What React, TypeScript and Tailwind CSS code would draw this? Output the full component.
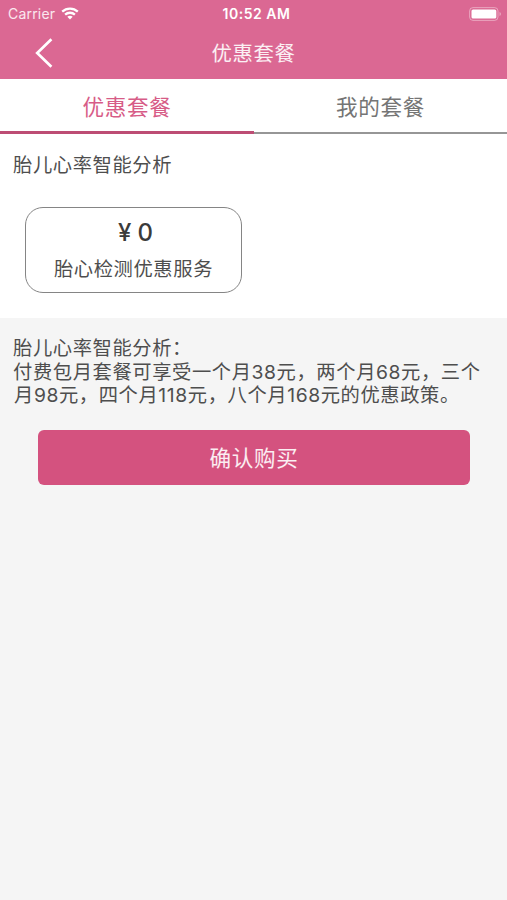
const description = [
  '胎儿心率智能分析：',
  '付费包月套餐可享受一个月38元，两个月68元，三个',
  '月98元，四个月118元，八个月168元的优惠政策。',
];

function WifiIcon() {
  return (
    <svg width="18" height="13" viewBox="0 0 18 13" fill="none" stroke="white" strokeWidth="2.3" className="mb-px ml-[6px]">
      <path d="M1.2 4.7C5.6 .6 12.4 .6 16.8 4.7" />
      <path d="M4.1 7.6C6.9 5.1 11.1 5.1 13.9 7.6" />
      <path d="M6.3 9.7C7.9 8.4 10.1 8.4 11.7 9.7L9 12.4Z" fill="white" stroke="none" />
    </svg>
  );
}

function BatteryIcon() {
  return (
    <svg width="33" height="14" viewBox="0 0 33 14" className="mr-[5px]">
      <rect x=".6" y=".6" width="28.4" height="12.8" rx="3.4" fill="none" stroke="white" strokeOpacity=".4" />
      <rect x="2.5" y="2.5" width="24.8" height="9" rx="1.6" fill="white" />
      <path d="M30.5 5V9C32.5 8.2 32.5 5.8 30.5 5Z" fill="white" fillOpacity=".4" />
    </svg>
  );
}

export default function App() {
  return (
    <div className="flex h-[900px] w-[507px] flex-col overflow-hidden bg-[#f5f5f5] font-[Inter,'Noto_Sans_CJK_SC',sans-serif] text-[#4e4e4e]">
      <header className="h-[79px] shrink-0 bg-[#db6893] text-white">
        <div className="grid h-[27px] grid-cols-3 items-center">
          <div className="flex items-center pl-[8px] text-[14px] tracking-[0.2px] text-white/85">
            Carrier
            <WifiIcon />
          </div>
          <div className="pb-px pl-[6px] text-center text-[14px] font-semibold tracking-[0.5px]">10:52 AM</div>
          <div className="flex justify-end"><BatteryIcon /></div>
        </div>
        <div className="grid h-[52px] grid-cols-[60px_1fr_60px] items-center">
          <button aria-label="返回" className="pl-[35px]">
            <svg width="18" height="30" viewBox="0 0 18 30" fill="none" stroke="white" strokeWidth="2.7">
              <path d="M16.4 1.2L2.2 15L16.4 28.8" />
            </svg>
          </button>
          <h1 className="pt-px text-center text-[20.4px] leading-[28px] tracking-[0.6px] text-white/90">优惠套餐</h1>
        </div>
      </header>

      <nav className="flex h-[55px] shrink-0 bg-white text-[21.6px] tracking-[0.7px]">
        <button className="flex w-[254px] items-center justify-center border-b-[3px] border-[#bd4d74] pt-[5px] text-[#d75c87]">优惠套餐</button>
        <button className="flex flex-1 items-center justify-center border-b-2 border-[#969696] pt-[4px] text-[#757575]">我的套餐</button>
      </nav>

      <section className="h-[184px] shrink-0 bg-white">
        <h2 className="pt-[17px] pl-[13px] text-[19.3px] leading-[28px] tracking-[0.6px]">胎儿心率智能分析</h2>
        <div className="mt-[28px] ml-[25px] flex h-[86px] w-[217px] flex-col items-center rounded-[18px] border border-[#858585]">
          <div className="mt-[9px] flex items-center gap-[6px] pl-[4px] text-[24px] leading-[32px] font-medium text-[#3b3b3b]">
            <span>¥</span><span>0</span>
          </div>
          <div className="mt-[6px] text-[19.3px] leading-[28px] tracking-[0.6px]">胎心检测优惠服务</div>
        </div>
      </section>

      <p className="h-[112px] shrink-0 pt-[19px] pl-[13px] text-[19.3px] leading-[23.5px] tracking-[0.6px] whitespace-nowrap">
        {description.map((line) => (
          <span key={line} className="block last:pl-px">{line}</span>
        ))}
      </p>

      <button className="mx-[37.5px] flex h-[55px] shrink-0 items-center justify-center rounded-[6px] bg-[#d4527f] pt-px pl-px text-[21.6px] tracking-[0.7px] text-white/90">
        确认购买
      </button>
    </div>
  );
}
